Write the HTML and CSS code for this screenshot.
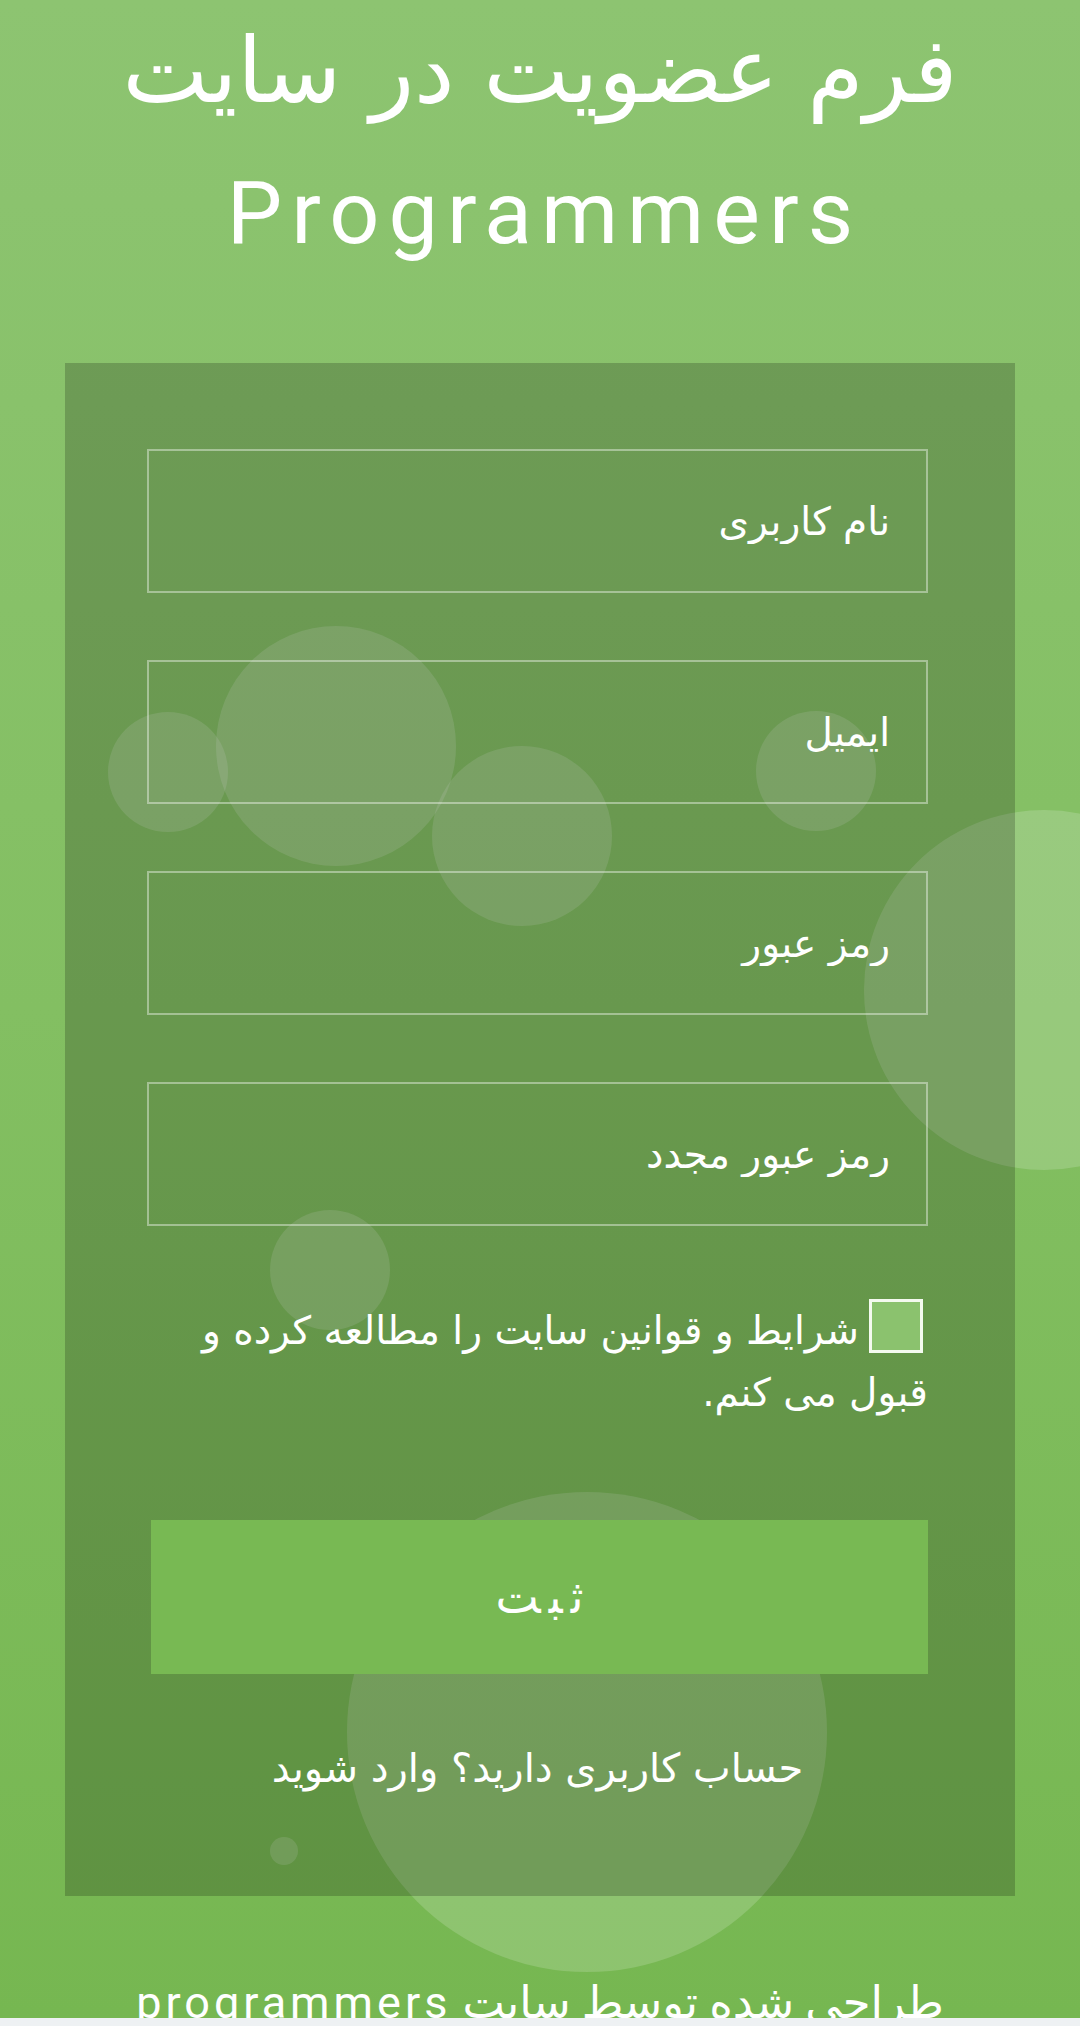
FILE: index.html
```html
<!DOCTYPE html>
<html lang="fa">
<head>
<meta charset="utf-8">
<title>فرم عضویت</title>
<link rel="stylesheet" href="styles.css">
</head>
<body>
<div class="page">
  <div class="bubbles" aria-hidden="true">
    <span class="bubble b1"></span>
    <span class="bubble b2"></span>
    <span class="bubble b3"></span>
    <span class="bubble b4"></span>
    <span class="bubble b5"></span>
    <span class="bubble b6"></span>
    <span class="bubble b7"></span>
    <span class="bubble b8"></span>
  </div>

  <h1 class="title"><span class="title-fa">فرم عضویت در سایت</span><br><span class="title-en">Programmers</span></h1>

  <form class="panel" dir="rtl">
    <input class="field" type="text" placeholder="نام کاربری">
    <input class="field" type="email" placeholder="ایمیل">
    <input class="field" type="password" placeholder="رمز عبور">
    <input class="field" type="password" placeholder="رمز عبور مجدد">
    <label class="terms"><span class="check"></span>شرایط و قوانین سایت را مطالعه کرده و قبول می کنم.</label>
    <button class="submit" type="button" aria-label="ثبت"><span class="ltr">ث&zwj;</span><span class="ltr">&zwj;ب&zwj;</span><span class="ltr">&zwj;ت</span></button>
    <a class="login" href="#">حساب کاربری دارید؟ وارد شوید</a>
  </form>

  <p class="footer" dir="rtl">طراحی شده توسط سایت programmers</p>
</div>
</body>
</html>
```
FILE: styles.css
```css
html {
  background: #eef1f3;
}
body {
  margin: 0;
  font-family: Roboto, "DejaVu Sans", sans-serif;
  color: #ffffff;
}
.page {
  position: relative;
  height: 2018px;
  overflow: hidden;
  background: linear-gradient(to bottom, #8dc471 0%, #83bf62 50%, #76b751 100%);
}
.bubbles {
  position: absolute;
  inset: 0;
  z-index: 0;
}
.bubble {
  position: absolute;
  border-radius: 50%;
  background: rgba(255, 255, 255, 0.17);
}
.b1 { left: 216px; top: 626px; width: 240px; height: 240px; }
.b2 { left: 108px; top: 712px; width: 120px; height: 120px; }
.b3 { left: 432px; top: 746px; width: 180px; height: 180px; }
.b4 { left: 756px; top: 711px; width: 120px; height: 120px; }
.b5 { left: 864px; top: 810px; width: 360px; height: 360px; }
.b6 { left: 270px; top: 1210px; width: 120px; height: 120px; }
.b7 { left: 347px; top: 1492px; width: 480px; height: 480px; }
.b8 { left: 270px; top: 1837px; width: 28px; height: 28px; }

.title {
  position: relative;
  z-index: 1;
  margin: 0;
  font-family: Roboto, "DejaVu Sans", sans-serif;
  font-weight: normal;
  font-size: 88px;
  line-height: 141px;
  text-align: center;
}
.title-fa {
  font-family: "DejaVu Sans", sans-serif;
  font-size: 91px;
}
.title-en {
  letter-spacing: 9px;
  margin-right: -9px;
}

.panel {
  position: relative;
  z-index: 1;
  margin: 80px 65px 0;
  padding: 86px 87px 98px 82px;
  background: rgba(0, 0, 0, 0.2);
  display: flex;
  flex-direction: column;
}
.field {
  box-sizing: border-box;
  height: 144px;
  margin: 0 0 67px;
  padding: 0 36px;
  border: 2px solid rgba(255, 255, 255, 0.4);
  background: transparent;
  color: #ffffff;
  font-family: "DejaVu Sans", sans-serif;
  font-size: 39px;
  text-align: right;
  outline: none;
}
.field::placeholder {
  color: #ffffff;
  opacity: 1;
}
.terms {
  margin-top: 6px;
  font-family: "DejaVu Sans", sans-serif;
  font-size: 39px;
  line-height: 62px;
  text-align: right;
}
.check {
  display: inline-block;
  box-sizing: border-box;
  width: 54px;
  height: 54px;
  margin: 0 5px 0 10px;
  border: 3px solid #f4faef;
  background: #8bc26e;
  vertical-align: -9px;
}
.submit {
  margin: 96px 0 0 4px;
  height: 154px;
  border: 0;
  padding: 0;
  background: #78b953;
  color: #ffffff;
  font-family: "DejaVu Sans", sans-serif;
  font-size: 46px;
  cursor: pointer;
}
.ltr {
  display: inline-block;
  margin: 0 4px;
}
.login {
  margin-top: 64px;
  display: block;
  color: #ffffff;
  text-decoration: none;
  text-align: center;
  font-family: "DejaVu Sans", sans-serif;
  font-size: 40px;
  line-height: 60px;
}
.footer {
  position: relative;
  z-index: 1;
  margin: 80px 0 0;
  text-align: center;
  font-family: Roboto, "DejaVu Sans", sans-serif;
  font-size: 45px;
  line-height: 53px;
  letter-spacing: 4px;
}
```
